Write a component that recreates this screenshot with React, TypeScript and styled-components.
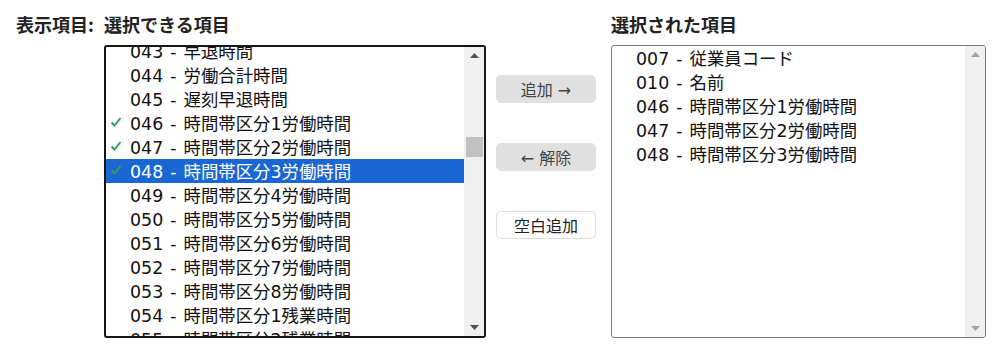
import styled, { createGlobalStyle } from "styled-components";

type ItemType = {
  code: string;
  name: string;
  checked?: boolean;
  active?: boolean;
};

const availableItems: ItemType[] = [
  { code: "043", name: "早退時間" },
  { code: "044", name: "労働合計時間" },
  { code: "045", name: "遅刻早退時間" },
  { code: "046", name: "時間帯区分1労働時間", checked: true },
  { code: "047", name: "時間帯区分2労働時間", checked: true },
  { code: "048", name: "時間帯区分3労働時間", checked: true, active: true },
  { code: "049", name: "時間帯区分4労働時間" },
  { code: "050", name: "時間帯区分5労働時間" },
  { code: "051", name: "時間帯区分6労働時間" },
  { code: "052", name: "時間帯区分7労働時間" },
  { code: "053", name: "時間帯区分8労働時間" },
  { code: "054", name: "時間帯区分1残業時間" },
  { code: "055", name: "時間帯区分2残業時間" },
];

const selectedItems: ItemType[] = [
  { code: "007", name: "従業員コード" },
  { code: "010", name: "名前" },
  { code: "046", name: "時間帯区分1労働時間" },
  { code: "047", name: "時間帯区分2労働時間" },
  { code: "048", name: "時間帯区分3労働時間" },
];

const GlobalStyle = createGlobalStyle`
  body {
    margin: 0;
    background: #fff;
    font-family: "DejaVu Sans", "Noto Sans CJK JP", sans-serif;
    color: #111;
  }
`;

const Check = () => (
  <svg width="12" height="12" viewBox="0 0 12 12">
    <path
      d="M1.5 6.5 L4.5 9.5 L10.5 2"
      fill="none"
      stroke="#2f9e5c"
      strokeWidth="2"
    />
  </svg>
);

const Arrow = ({ up, color }: { up?: boolean; color: string }) => (
  <svg width="9" height="5" viewBox="0 0 9 5">
    <path d={up ? "M0 5 L4.5 0 L9 5 Z" : "M0 0 L4.5 5 L9 0 Z"} fill={color} />
  </svg>
);

const ScrollBar = ({
  thumbTop,
  enabled,
}: {
  thumbTop?: number;
  enabled: boolean;
}) => {
  const arrowColor = enabled ? "#505050" : "#a3a3a3";
  return (
    <Track>
      <ArrowBox>
        <Arrow up color={arrowColor} />
      </ArrowBox>
      <Rail>
        {thumbTop !== undefined && <Thumb style={{ marginTop: thumbTop }} />}
      </Rail>
      <ArrowBox>
        <Arrow color={arrowColor} />
      </ArrowBox>
    </Track>
  );
};

const App = () => {
  return (
    <>
      <GlobalStyle />
      <Page>
        <Label>表示項目:</Label>
        <Column $width={382}>
          <Heading>選択できる項目</Heading>
          <ListBox $focused>
            <Options $offset={-8}>
              {availableItems.map((item) => (
                <Option key={item.code} $active={item.active}>
                  <CheckCell>{item.checked && <Check />}</CheckCell>
                  {item.code} - {item.name}
                </Option>
              ))}
            </Options>
            <ScrollBar thumbTop={73} enabled />
          </ListBox>
        </Column>
        <Actions>
          <ActionButton>追加 →</ActionButton>
          <ActionButton>← 解除</ActionButton>
          <ActionButton $outline>空白追加</ActionButton>
        </Actions>
        <Column $width={375}>
          <Heading>選択された項目</Heading>
          <ListBox>
            <Options>
              {selectedItems.map((item) => (
                <Option key={item.code}>
                  <CheckCell />
                  {item.code} - {item.name}
                </Option>
              ))}
            </Options>
            <ScrollBar enabled={false} />
          </ListBox>
        </Column>
      </Page>
    </>
  );
};

const Page = styled.div`
  display: flex;
  align-items: flex-start;
  padding: 12px 0 0 16px;
`;

const Label = styled.div`
  width: 88px;
  flex-shrink: 0;
  font-size: 18px;
  font-weight: 700;
  line-height: 24px;
  color: #222;
  font-family: "Noto Sans CJK JP", sans-serif;
`;

const Column = styled.div<{ $width: number }>`
  display: flex;
  flex-direction: column;
  width: ${({ $width }) => $width}px;
  flex-shrink: 0;
`;

const Heading = styled.div`
  font-size: 18px;
  font-weight: 700;
  line-height: 24px;
  color: #222;
  margin-bottom: 9px;
  font-family: "Noto Sans CJK JP", sans-serif;
`;

const ListBox = styled.div<{ $focused?: boolean }>`
  display: flex;
  height: 293px;
  box-sizing: border-box;
  border: ${({ $focused }) =>
    $focused ? "2px solid #161616" : "1px solid #7a7a7a"};
  border-radius: 3px;
  overflow: hidden;
  background: #fff;
`;

const Options = styled.div<{ $offset?: number }>`
  flex: 1;
  overflow: hidden;
  & > :first-child {
    margin-top: ${({ $offset }) => $offset ?? 0}px;
  }
`;

const Option = styled.div<{ $active?: boolean }>`
  display: flex;
  align-items: center;
  height: 24px;
  box-sizing: border-box;
  padding: 0 0 2px 4px;
  font-size: 17.4px;
  word-spacing: 1.5px;
  white-space: pre;
  color: ${({ $active }) => ($active ? "#fff" : "#111")};
  background: ${({ $active }) => ($active ? "#1a67d3" : "transparent")};
`;

const CheckCell = styled.span`
  display: inline-flex;
  align-items: center;
  width: 20px;
  height: 22px;
`;

const Track = styled.div`
  display: flex;
  flex-direction: column;
  width: 20px;
  background: #f0f0f0;
`;

const ArrowBox = styled.div`
  display: flex;
  align-items: center;
  justify-content: center;
  height: 17px;
`;

const Rail = styled.div`
  flex: 1;
  display: flex;
  flex-direction: column;
  padding: 0 1px 0 2px;
`;

const Thumb = styled.div`
  height: 20px;
  background: #c1c1c1;
`;

const Actions = styled.div`
  display: flex;
  flex-direction: column;
  gap: 40px;
  width: 100px;
  flex-shrink: 0;
  margin: 0 15px 0 10px;
  padding-top: 63px;
`;

const ActionButton = styled.button<{ $outline?: boolean }>`
  height: 28px;
  width: 100px;
  box-sizing: border-box;
  border-radius: 5px;
  border: 1px solid ${({ $outline }) => ($outline ? "#dcdcdc" : "#e0e0e0")};
  background: ${({ $outline }) => ($outline ? "#fff" : "#e0e0e0")};
  color: ${({ $outline }) => ($outline ? "#222" : "#444")};
  font-family: "DejaVu Sans", "Noto Sans CJK JP", sans-serif;
  font-size: 16px;
  padding: 0;
  cursor: pointer;
`;

export default App;
